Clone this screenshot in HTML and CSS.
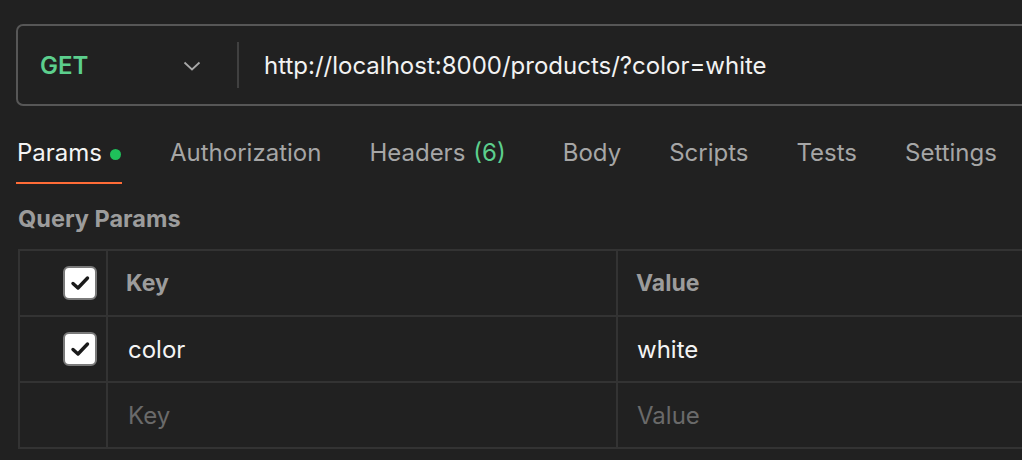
FILE: index.html
```html
<!DOCTYPE html>
<html>
<head>
<meta charset="utf-8">
<link rel="stylesheet" href="styles.css">
</head>
<body>
<div class="page">
  <div class="urlbar">
    <div class="method">
      <span class="method-name">GET</span>
      <svg class="chev" width="18" height="10" viewBox="0 0 18 10"><path d="M1.5 1.5 L9 8.5 L16.5 1.5" fill="none" stroke="#a8a8a8" stroke-width="1.8"/></svg>
    </div>
    <div class="divider"></div>
    <div class="url">http://localhost:8000/products/?color=white</div>
  </div>

  <div class="tabs">
    <div class="tab active">Params <span class="dot"></span></div>
    <div class="tab">Authorization</div>
    <div class="tab headers">Headers <span class="count">(6)</span></div>
    <div class="tab">Body</div>
    <div class="tab">Scripts</div>
    <div class="tab">Tests</div>
    <div class="tab">Settings</div>
  </div>

  <div class="section-title">Query Params</div>

  <div class="table">
    <div class="row head">
      <div class="cell check"><span class="cb"><svg width="20" height="16" viewBox="0 0 20 16"><path d="M3 8.5 L8 13 L17.5 3" fill="none" stroke="#1a1a1a" stroke-width="3.4" stroke-linecap="round" stroke-linejoin="round"/></svg></span></div>
      <div class="cell key">Key</div>
      <div class="cell value">Value</div>
    </div>
    <div class="row">
      <div class="cell check"><span class="cb"><svg width="20" height="16" viewBox="0 0 20 16"><path d="M3 8.5 L8 13 L17.5 3" fill="none" stroke="#1a1a1a" stroke-width="3.4" stroke-linecap="round" stroke-linejoin="round"/></svg></span></div>
      <div class="cell key data">color</div>
      <div class="cell value data">white</div>
    </div>
    <div class="row">
      <div class="cell check"></div>
      <div class="cell key placeholder">Key</div>
      <div class="cell value placeholder">Value</div>
    </div>
  </div>
</div>
</body>
</html>
```

FILE: styles.css
```css
html, body {
  margin: 0;
  padding: 0;
  background: #212121;
}
body {
  width: 1022px;
  height: 460px;
  overflow: hidden;
  font-family: "Inter", "Noto Sans", sans-serif;
  color: #f0f0f0;
}
.page {
  padding: 24px 0 0 16px;
}
.urlbar {
  display: flex;
  align-items: center;
  height: 78px;
  width: 1040px;
  border: 2px solid #575757;
  border-radius: 7px;
  box-sizing: content-box;
}
.method {
  display: flex;
  align-items: center;
  width: 219px;
  padding-left: 22px;
  box-sizing: border-box;
}
.method-name {
  color: #5ccf8d;
  font-size: 24px;
  font-weight: 600;
  flex: 1;
}
.chev {
  margin-right: 36px;
  margin-top: 2px;
}
.divider {
  width: 2px;
  height: 46px;
  background: #404040;
}
.url {
  font-size: 24px;
  padding-left: 25px;
  color: #f2f2f2;
}
.tabs {
  display: flex;
  gap: 48px;
  margin-top: 30px;
  padding-left: 1px;
}
.tab {
  font-size: 24px;
  color: #a6a6a6;
  height: 48px;
  line-height: 32px;
  padding-top: 1px;
  box-sizing: border-box;
  display: flex;
  align-items: flex-start;
}
.tab.active {
  color: #f4f4f4;
  border-bottom: 2px solid #ff6c37;
  padding-right: 1px;
  margin-left: -1px;
  padding-left: 1px;
}
.dot {
  display: inline-block;
  width: 11px;
  height: 11px;
  border-radius: 50%;
  background: #1fc05a;
  margin-left: 8px;
  margin-top: 12px;
}
.count {
  color: #5ccf8d;
  margin-left: 8px;
}
.headers {
  margin-right: 9px;
}
.section-title {
  margin-top: 21px;
  padding-left: 2px;
  font-size: 23.5px;
  font-weight: 700;
  color: #9c9c9c;
  line-height: 28px;
}
.table {
  margin-top: 16px;
  margin-left: 2px;
  border-top: 2px solid #333;
  border-left: 2px solid #333;
  width: 1010px;
}
.row {
  display: flex;
  height: 66px;
  border-bottom: 2px solid #333;
  box-sizing: border-box;
}
.cell {
  display: flex;
  align-items: center;
  font-size: 24px;
}
.check {
  width: 88px;
  justify-content: flex-end;
  padding-right: 9px;
  box-sizing: border-box;
  border-right: 2px solid #333;
}
.key {
  width: 510px;
  padding-left: 20px;
  box-sizing: border-box;
  border-right: 2px solid #333;
}
.value {
  flex: 1;
  padding-left: 19px;
}
.head .key, .head .value {
  font-size: 23px;
  font-weight: 700;
  color: #9c9c9c;
  padding-left: 18px;
}
.data {
  color: #f4f4f4;
}
.placeholder {
  color: #6a6a6a;
}
.cb {
  width: 30px;
  height: 30px;
  background: #fff;
  border: 2px solid #7a7a7a;
  border-radius: 6px;
  display: flex;
  align-items: center;
  justify-content: center;
}
```
